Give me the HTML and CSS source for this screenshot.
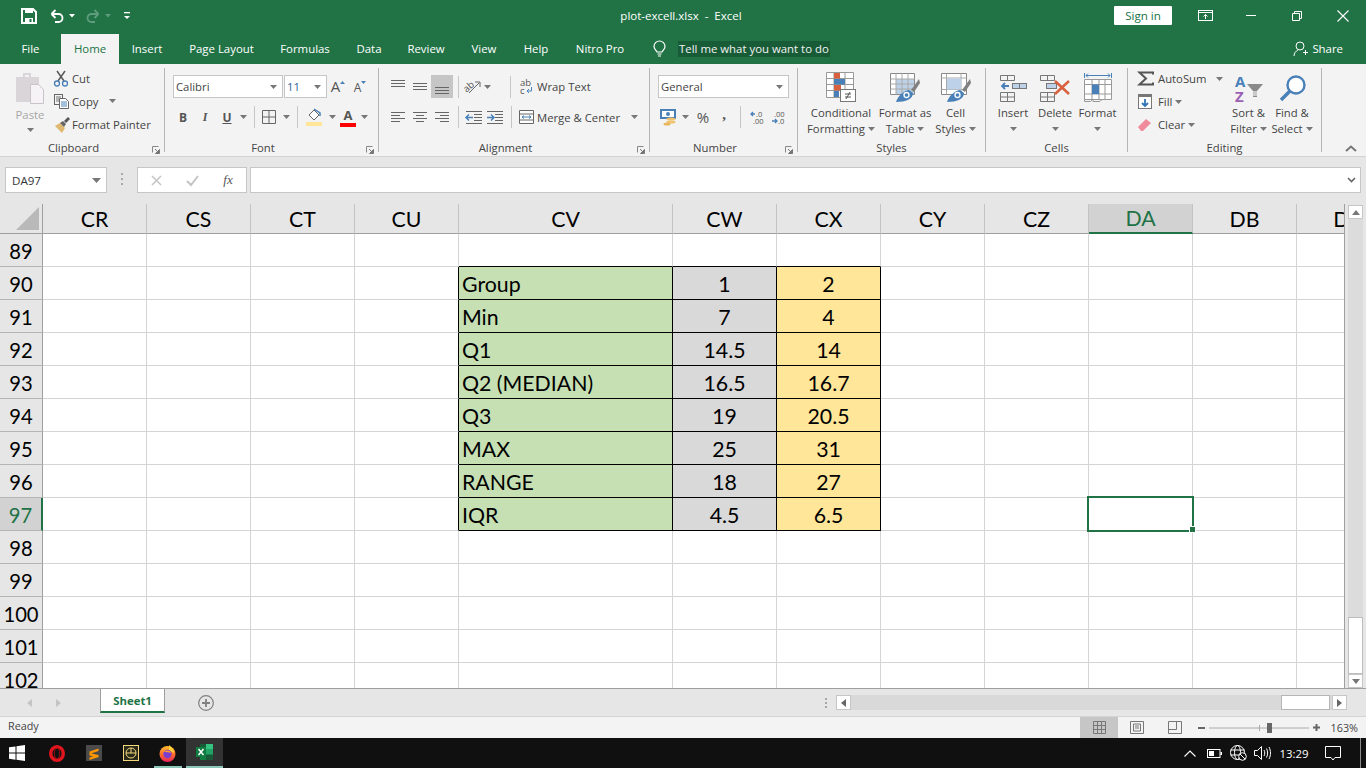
FILE: index.html
```html
<!DOCTYPE html>
<html lang="en">
<head>
<meta charset="utf-8">
<title>plot-excell.xlsx - Excel</title>
<link rel="stylesheet" href="styles.css">
</head>
<body>
<svg class="defs" aria-hidden="true">
  <symbol id="car" viewBox="0 0 7 4"><path d="M0 0h7L3.500 4z" fill="#777"/></symbol>
  <symbol id="launch" viewBox="0 0 8 8"><path d="M.5 6.500V.5h6" fill="none" stroke="#888"/><path d="M3 3l3.500 3.500M7.500 3.500v4h-4z" fill="#777" stroke="#777"/></symbol>
</svg>

<header class="titlebar">
  <div class="qat">
    <span class="w20"><svg width="16" height="16" viewBox="0 0 16 16"><path d="M1 1h11l3 3v11H1z" fill="none" stroke="#fff" stroke-width="2"/><rect x="4" y="2" width="8" height="3" fill="#fff"/><rect x="4" y="10" width="8" height="5" fill="#fff"/><rect x="8.500" y="11" width="2" height="3" fill="#217346"/></svg></span>
    <span class="w8"></span>
    <span class="w20"><svg width="14" height="14" viewBox="0 0 14 14"><path d="M1.500 5L5.500 1M1.500 5l4 4M1.500 5h7a4 4 0 0 1 0 8H5" fill="none" stroke="#fff" stroke-width="1.800"/></svg></span>
    <span class="w10"><svg width="6" height="4" viewBox="0 0 6 4"><path d="M0 0h6L3 3.500z" fill="#fff"/></svg></span>
    <span class="w6"></span>
    <span class="w20"><svg width="14" height="14" viewBox="0 0 14 14"><path d="M12.500 5L8.500 1M12.500 5l-4 4M12.500 5h-7a4 4 0 0 0 0 8H9" fill="none" stroke="#5f9c7d" stroke-width="1.800"/></svg></span>
    <span class="w10"><svg width="6" height="4" viewBox="0 0 6 4"><path d="M0 0h6L3 3.500z" fill="#5f9c7d"/></svg></span>
    <span class="w10"></span>
    <span class="w8"><svg width="6" height="8" viewBox="0 0 6 8"><rect width="6" height="1.300" fill="#fff"/><path d="M0 4h6L3 7z" fill="#fff"/></svg></span>
  </div>
  <div class="doc-title">plot-excell.xlsx &nbsp;-&nbsp; Excel</div>
  <div class="winctl">
    <button class="signin">Sign in</button>
    <span class="wbtn"><svg width="15" height="11" viewBox="0 0 15 11"><rect x=".5" y=".5" width="14" height="10" fill="none" stroke="#fff"/><path d="M0 2.500h15" stroke="#fff"/><path d="M7.500 9V4.500M5.500 6.500l2-2 2 2" fill="none" stroke="#fff"/></svg></span>
    <span class="wbtn"><svg width="10" height="1" viewBox="0 0 10 1"><rect width="10" height="1" fill="#fff"/></svg></span>
    <span class="wbtn"><svg width="10" height="10" viewBox="0 0 10 10"><path d="M.5 2.500h7v7h-7zM2.500 2.500v-2h7v7h-2" fill="none" stroke="#fff"/></svg></span>
    <span class="wbtn"><svg width="12" height="12" viewBox="0 0 12 12"><path d="M.5.500l11 11M11.500.5l-11 11" stroke="#fff" stroke-width="1.100"/></svg></span>
  </div>
</header>

<nav class="tabs">
  <a class="tab">File</a>
  <a class="tab active">Home</a>
  <a class="tab">Insert</a>
  <a class="tab">Page Layout</a>
  <a class="tab">Formulas</a>
  <a class="tab">Data</a>
  <a class="tab">Review</a>
  <a class="tab">View</a>
  <a class="tab">Help</a>
  <a class="tab">Nitro Pro</a>
  <span class="bulb"><svg width="13" height="16" viewBox="0 0 13 16"><path d="M4 11C3 9 1 8 1 5.500a5.500 5.500 0 0 1 11 0C12 8 10 9 9 11z" fill="none" stroke="#fff" stroke-width="1.200"/><path d="M4.500 13h4M5 15h3" stroke="#fff" stroke-width="1.200"/></svg></span>
  <span class="tellme">Tell me what you want to do</span>
  <span class="share"><svg width="15" height="16" viewBox="0 0 15 16"><circle cx="7" cy="5" r="4" fill="none" stroke="#fff"/><path d="M1 15c0-3 2-5 4-6M10 11.500h5M12.500 9v5" fill="none" stroke="#fff"/></svg>Share</span>
</nav>

<section class="ribbon">
  <div class="group g-clip">
    <div class="body pl15">
      <div class="big w30 dim">
        <div class="big-ic"><svg width="28" height="31" viewBox="0 0 28 31"><path d="M0 4h7V0h8v4h8v25H0z" fill="#d9d5d9"/><rect x="9" y="2" width="4" height="2" fill="#f3f3f3"/><path d="M14.500 11.500h8l5 5v14h-13z" fill="#f5f3f5" stroke="#c8c4c8"/></svg></div>
        <div class="big-t">Paste</div>
        <div class="big-t"><svg class="car" width="7" height="4"><use href="#car"/></svg></div>
      </div>
      <div class="smalls ml9">
        <div class="small"><span class="sic"><svg width="14" height="16" viewBox="0 0 14 16"><path d="M3 0l7 10M11 0L4 10" stroke="#5a5a5a" stroke-width="1.500" fill="none"/><circle cx="3" cy="12.500" r="2.500" fill="none" stroke="#4a80b8" stroke-width="1.300"/><circle cx="11" cy="12.500" r="2.500" fill="none" stroke="#4a80b8" stroke-width="1.300"/></svg></span>Cut</div>
        <div class="small"><span class="sic"><svg width="15" height="15" viewBox="0 0 15 15"><rect x=".5" y=".5" width="8" height="10" fill="#f3f3f3" stroke="#666"/><path d="M2 3h5M2 5h3M2 7h3" stroke="#777"/><path d="M5.500 4.500h6l3 3v7h-9z" fill="#fff" stroke="#666"/><path d="M7 8h6M7 10h6M7 12h6" stroke="#4a80b8"/></svg></span><span class="t37">Copy</span><svg class="car" width="7" height="4"><use href="#car"/></svg></div>
        <div class="small"><span class="sic"><svg width="16" height="16" viewBox="0 0 16 16"><path d="M1 9l5-3 5 5-3 5z" fill="#e0b870"/><path d="M6 6l3-2 3 3-2 3z" fill="#666"/><path d="M10 4l4-4 2 2-4 4z" fill="#555"/></svg></span>Format Painter</div>
      </div>
    </div>
    <div class="label"><span class="lt">Clipboard</span><svg class="launch" width="8" height="8"><use href="#launch"/></svg></div>
  </div>

  <div class="group g-font">
    <div class="body col pt7">
      <div class="row pl8">
        <div class="combo w110"><span>Calibri</span><svg width="7" height="4"><use href="#car"/></svg></div>
        <div class="combo w44 ml1"><span class="blue">11</span><svg width="7" height="4"><use href="#car"/></svg></div>
        <span class="w22"><span class="ga">A</span><svg class="tri" width="5" height="3" viewBox="0 0 5 3"><path d="M0 3h5L2.500 0z" fill="#4a80b8"/></svg></span>
        <span class="w22"><span class="gb">A</span><svg class="tri" width="5" height="3" viewBox="0 0 5 3"><path d="M0 0h5L2.500 3z" fill="#4a80b8"/></svg></span>
      </div>
      <div class="row pl7">
        <span class="w22 fb">B</span>
        <span class="w22 fi">I</span>
        <span class="w22 fu">U</span>
        <span class="w11"><svg width="7" height="4"><use href="#car"/></svg></span>
        <span class="w10"><i class="sep"></i></span>
        <span class="w20"><svg width="14" height="14" viewBox="0 0 14 14"><path d="M.5.500h13v13H.5zM7 .5v13M.5 7h13" fill="none" stroke="#666"/></svg></span>
        <span class="w14"><svg width="7" height="4"><use href="#car"/></svg></span>
        <span class="w8"><i class="sep"></i></span>
        <span class="w26"><svg width="17" height="18" viewBox="0 0 17 18"><path d="M3 7l5-5 5 5-5 5z" fill="#fff" stroke="#666"/><path d="M8 1l6 4v3" fill="none" stroke="#4a80b8" stroke-width="1.500"/><rect x="0" y="14" width="16" height="4" fill="#ffe699"/></svg></span>
        <span class="w10"><svg width="7" height="4"><use href="#car"/></svg></span>
        <span class="w22 fc">A</span>
        <span class="w10"><svg width="7" height="4"><use href="#car"/></svg></span>
      </div>
    </div>
    <div class="label"><span class="lt">Font</span><svg class="launch" width="8" height="8"><use href="#launch"/></svg></div>
  </div>

  <div class="group g-align">
    <div class="body col pt7">
      <div class="row pl8">
        <span class="w22 al-t"><svg width="14" height="8" viewBox="0 0 14 8"><path d="M0 .5h14M0 3.500h14M0 6.500h14" stroke="#666"/></svg></span>
        <span class="w22 al-m"><svg width="14" height="8" viewBox="0 0 14 8"><path d="M0 .5h14M0 3.500h14M0 6.500h14" stroke="#666"/></svg></span>
        <span class="w22 al-b on"><svg width="14" height="7" viewBox="0 0 14 7"><path d="M0 .5h14M0 3.500h14M0 6.500h14" stroke="#666"/></svg></span>
        <span class="w10"><i class="sep"></i></span>
        <span class="w18"><svg width="17" height="15" viewBox="0 0 17 15"><text x="0" y="11" class="svgt" transform="rotate(-40 5 9)">ab</text><path d="M5 14L15 4M11 3h5v5" fill="none" stroke="#666"/></svg></span>
        <span class="w12"><svg width="7" height="4"><use href="#car"/></svg></span>
        <span class="w12"></span>
        <span class="w10"><i class="sep"></i></span>
        <span class="w22"><svg width="13" height="17" viewBox="0 0 13 17"><text x="0" y="7.500" class="svgt">ab</text><text x="0" y="16" class="svgt">c</text><path d="M11.500 9v4H7M9 11l-2 2 2 2" fill="none" stroke="#4a80b8"/></svg></span>
        <span class="txt">Wrap Text</span>
      </div>
      <div class="row pl8">
        <span class="w22"><svg width="14" height="11" viewBox="0 0 14 11"><path d="M0 .5h14M0 3.500h9M0 6.500h14M0 9.500h9" stroke="#666"/></svg></span>
        <span class="w22"><svg width="14" height="11" viewBox="0 0 14 11"><path d="M0 .5h14M3 3.500h8M0 6.500h14M3 9.500h8" stroke="#666"/></svg></span>
        <span class="w22"><svg width="14" height="11" viewBox="0 0 14 11"><path d="M0 .5h14M5 3.500h9M0 6.500h14M5 9.500h9" stroke="#666"/></svg></span>
        <span class="w10"><i class="sep"></i></span>
        <span class="w21"><svg width="16" height="13" viewBox="0 0 16 13"><path d="M0 6.500h7M3 3.500l-3 3 3 3" fill="none" stroke="#4a80b8" stroke-width="1.500"/><path d="M0 .5h16M8 3.500h8M8 6.500h8M8 9.500h8M0 12.500h16" stroke="#666"/></svg></span>
        <span class="w22"><svg width="16" height="13" viewBox="0 0 16 13"><path d="M7 6.500H0M4 3.500l3 3-3 3" fill="none" stroke="#4a80b8" stroke-width="1.500"/><path d="M0 .5h16M8 3.500h8M8 6.500h8M8 9.500h8M0 12.500h16" stroke="#666"/></svg></span>
        <span class="w10"><i class="sep"></i></span>
        <span class="w21"><svg width="15" height="14" viewBox="0 0 15 14"><path d="M.5.500h14v13H.5zM.5 4h14M.5 10h14" fill="#fff" stroke="#666"/><path d="M3 7h9M5 5.500L3 7l2 1.500M10 5.500L12 7l-2 1.500" fill="none" stroke="#4a80b8"/></svg></span>
        <span class="txt t94">Merge &amp; Center</span>
        <svg width="7" height="4"><use href="#car"/></svg>
      </div>
    </div>
    <div class="label"><span class="lt">Alignment</span><svg class="launch" width="8" height="8"><use href="#launch"/></svg></div>
  </div>

  <div class="group g-num">
    <div class="body col pt7">
      <div class="row pl8"><div class="combo w131"><span>General</span><svg width="7" height="4"><use href="#car"/></svg></div></div>
      <div class="row pl8">
        <span class="w20"><svg width="17" height="17" viewBox="0 0 17 17"><rect x="1" y="1" width="14" height="8" fill="#fff" stroke="#4a80b8" stroke-width="2"/><circle cx="8" cy="5" r="2" fill="#4a80b8"/><ellipse cx="11" cy="10" rx="4.500" ry="1.500" fill="#f0c36d"/><ellipse cx="11" cy="13" rx="4.500" ry="1.500" fill="#f0c36d"/><ellipse cx="7" cy="15" rx="3.500" ry="1.500" fill="#e8b45c"/></svg></span>
        <span class="w14"><svg width="7" height="4"><use href="#car"/></svg></span>
        <span class="w22 fp">%</span>
        <span class="w20 fk">,</span>
        <span class="w12"><i class="sep"></i></span>
        <span class="w21 dec"><svg width="14" height="15" viewBox="0 0 14 15"><path d="M5 4H1M3 2L1 4l2 2" fill="none" stroke="#4a80b8" stroke-width="1.300"/><text x="6" y="6.500" class="svgs">.0</text><text x="3" y="14" class="svgs">.00</text></svg></span>
        <span class="w21 dec"><svg width="14" height="15" viewBox="0 0 14 15"><text x="3" y="6.500" class="svgs">.00</text><path d="M1 11h5M4 9l2 2-2 2" fill="none" stroke="#4a80b8" stroke-width="1.300"/><text x="7" y="14" class="svgs">.0</text></svg></span>
      </div>
    </div>
    <div class="label"><span class="lt">Number</span><svg class="launch" width="8" height="8"><use href="#launch"/></svg></div>
  </div>

  <div class="group g-styles">
    <div class="body pl11">
      <div class="big w64">
        <div class="big-ic"><svg width="30" height="30" viewBox="0 0 30 30"><path d="M.5.500h27v25H.5zM.5 6.500h27M.5 12.500h27M.5 18.500h27M8 .5v25M19 .5v25" fill="#fff" stroke="#999"/><rect x="8" y="1" width="6" height="5.500" fill="#d9603f"/><rect x="8" y="7" width="11" height="5.500" fill="#4a80b8"/><rect x="8" y="13" width="7" height="5.500" fill="#d9603f"/><rect x="8" y="19" width="5" height="6" fill="#4a80b8"/><rect x="14.500" y="17.500" width="15" height="12" fill="#fff" stroke="#777"/><path d="M19 22h6M19 25h6M24 20l-4 7" stroke="#555"/></svg></div>
        <div class="big-t">Conditional</div>
        <div class="big-t">Formatting<svg class="car3" width="7" height="4"><use href="#car"/></svg></div>
      </div>
      <div class="big w64">
        <div class="big-ic"><svg width="30" height="29" viewBox="0 0 30 29"><path d="M.5.500h24v21H.5z" fill="#fff" stroke="#888"/><rect x="6" y="6" width="18" height="15" fill="#bdd2e8"/><path d="M.5 6h24M.5 11h24M.5 16h24M6 .5v21M12 .5v21M18 .5v21" stroke="#aaa" fill="none"/><path d="M29 6l-8 11 3 2 6-9z" fill="#808080"/><path d="M6 29c2-6 7-11 13-12l4 3c0 6-7 9-17 9z" fill="#4a80b8"/><circle cx="16.500" cy="22" r="2.500" fill="none" stroke="#fff" stroke-width="1.300"/></svg></div>
        <div class="big-t">Format as</div>
        <div class="big-t">Table<svg class="car3" width="7" height="4"><use href="#car"/></svg></div>
      </div>
      <div class="big w37">
        <div class="big-ic"><svg width="30" height="29" viewBox="0 0 30 29"><path d="M.5.500h25v21H.5z" fill="#fff" stroke="#888"/><path d="M.5 5h25M.5 16.500h25M5.500 .5v21M20 .5v21" stroke="#aaa" fill="none"/><rect x="6" y="5.500" width="14" height="11" fill="#bdd2e8"/><path d="M29 6l-8 11 3 2 6-9z" fill="#808080"/><path d="M6 29c2-6 7-11 13-12l4 3c0 6-7 9-17 9z" fill="#4a80b8"/><circle cx="16.500" cy="22" r="2.500" fill="none" stroke="#fff" stroke-width="1.300"/></svg></div>
        <div class="big-t">Cell</div>
        <div class="big-t">Styles<svg class="car3" width="7" height="4"><use href="#car"/></svg></div>
      </div>
    </div>
    <div class="label"><span class="lt">Styles</span></div>
  </div>

  <div class="group g-cells">
    <div class="body pl6">
      <div class="big w42">
        <div class="big-ic"><svg width="27" height="27" viewBox="0 0 27 27"><path d="M.5.500h14v5H.5zM7.500.5v5M.5 17.500h14v9H.5zM.5 22h14M7.500 17.500v9" fill="none" stroke="#777"/><rect x="12.500" y="8.500" width="14" height="5" fill="#bdd2e8" stroke="#777"/><path d="M19.500 8.500v5" stroke="#777"/><path d="M9 11H2M5 8l-3 3 3 3" fill="none" stroke="#4a80b8" stroke-width="1.800"/></svg></div>
        <div class="big-t">Insert</div>
        <div class="big-t"><svg class="car" width="7" height="4"><use href="#car"/></svg></div>
      </div>
      <div class="big w42">
        <div class="big-ic"><svg width="30" height="27" viewBox="0 0 30 27"><path d="M.5.500h14v5H.5zM7.500.5v5M.5 17.500h14v9H.5zM.5 22h14M7.500 17.500v9" fill="none" stroke="#777"/><rect x="6.500" y="8.500" width="10" height="5" fill="#bdd2e8" stroke="#777"/><path d="M15 6l14 13M29 6L15 19" stroke="#d9603f" stroke-width="2.500"/></svg></div>
        <div class="big-t">Delete</div>
        <div class="big-t"><svg class="car" width="7" height="4"><use href="#car"/></svg></div>
      </div>
      <div class="big w43">
        <div class="big-ic"><svg width="28" height="29" viewBox="0 0 28 29"><path d="M.5 0v5M27.500 0v5M2 2.500h24M4 .5l-2 2 2 2M24 .5l2 2-2 2" fill="none" stroke="#4a80b8"/><path d="M.5 6.500h27v20H.5zM.5 11.500h27M.5 21h27M8 6.500v20M15 6.500v20M21 6.500v20" fill="#fff" stroke="#999"/><rect x="8" y="11.500" width="7" height="9.500" fill="#4a80b8"/><path d="M.5 26.500v2h6l2-2M9 26.500v2h7l2-2" fill="none" stroke="#999"/></svg></div>
        <div class="big-t">Format</div>
        <div class="big-t"><svg class="car" width="7" height="4"><use href="#car"/></svg></div>
      </div>
    </div>
    <div class="label"><span class="lt">Cells</span></div>
  </div>

  <div class="group g-edit">
    <div class="body pl10">
      <div class="smalls w89">
        <div class="small"><span class="sic20"><svg width="15" height="15" viewBox="0 0 15 15"><path d="M15 3.500V1.500H1.500L8 7.500 1.500 13.500H15v-2" fill="none" stroke="#555" stroke-width="2"/></svg></span><span class="t58">AutoSum</span><svg width="7" height="4"><use href="#car"/></svg></div>
        <div class="small"><span class="sic20"><svg width="14" height="15" viewBox="0 0 14 15"><rect x=".5" y=".5" width="13" height="14" fill="#fff" stroke="#777"/><rect width="14" height="3" fill="#777"/><path d="M7 5v7M4 9l3 3 3-3" fill="none" stroke="#2f74b5" stroke-width="1.800"/></svg></span>Fill<svg class="car3" width="7" height="4"><use href="#car"/></svg></div>
        <div class="small"><span class="sic20"><svg width="13" height="13" viewBox="0 0 13 13"><path d="M0 9l8-8 5 4-8 8H3z" fill="#ef8b9b"/></svg></span>Clear<svg class="car3" width="7" height="4"><use href="#car"/></svg></div>
      </div>
      <div class="big w43">
        <div class="big-ic"><svg width="30" height="27" viewBox="0 0 30 27"><text x="1" y="12" class="az a">A</text><text x="1" y="27" class="az z">Z</text><path d="M13 9h16l-6 7v6h-4v-6z" fill="#8a8a8a"/><path d="M19 16h4v5h-4z" fill="#f3f3f3" opacity=".6"/></svg></div>
        <div class="big-t">Sort &amp;</div>
        <div class="big-t">Filter<svg class="car3" width="7" height="4"><use href="#car"/></svg></div>
      </div>
      <div class="big w44">
        <div class="big-ic"><svg width="27" height="27" viewBox="0 0 27 27"><circle cx="17" cy="10" r="8.500" fill="#fff" stroke="#4a80b8" stroke-width="2.400"/><path d="M11 16L2 25" stroke="#4a80b8" stroke-width="3.600"/></svg></div>
        <div class="big-t">Find &amp;</div>
        <div class="big-t">Select<svg class="car3" width="7" height="4"><use href="#car"/></svg></div>
      </div>
    </div>
    <div class="label"><span class="lt">Editing</span></div>
  </div>

  <div class="collapse"><svg width="12" height="7" viewBox="0 0 12 7"><path d="M1 6l5-4.500L11 6" fill="none" stroke="#777" stroke-width="2"/></svg></div>
</section>

<section class="formula">
  <div class="namebox"><span>DA97</span><svg width="9" height="5" viewBox="0 0 9 5"><path d="M0 0h9L4.500 5z" fill="#777"/></svg></div>
  <div class="dots"><i></i><i></i><i></i></div>
  <div class="fxbtns">
    <span><svg width="11" height="11" viewBox="0 0 11 11"><path d="M1 1l9 9M10 1l-9 9" stroke="#c4c4c4" stroke-width="1.500"/></svg></span>
    <span><svg width="13" height="11" viewBox="0 0 13 11"><path d="M1 6l4 4 7-9" fill="none" stroke="#c4c4c4" stroke-width="2"/></svg></span>
    <span class="fx">fx</span>
  </div>
  <div class="fxinput"><svg width="9" height="6" viewBox="0 0 9 6"><path d="M1 1l3.500 3.500L8 1" fill="none" stroke="#666" stroke-width="1.600"/></svg></div>
</section>

<main class="sheetwrap">
  <div class="grid">
    <table class="cells">
      <colgroup><col class="ch"><col class="cn"><col class="cn"><col class="cn"><col class="cn"><col class="cw"><col class="cn"><col class="cn"><col class="cn"><col class="cn"><col class="cn"><col class="cn"><col class="cn"></colgroup>
      <thead>
        <tr><th class="corner"><svg width="23" height="23" viewBox="0 0 23 23"><path d="M23 0v23H0z" fill="#b9b9b9"/></svg></th><th>CR</th><th>CS</th><th>CT</th><th>CU</th><th>CV</th><th>CW</th><th>CX</th><th>CY</th><th>CZ</th><th class="csel">DA</th><th>DB</th><th>DC</th></tr>
      </thead>
      <tbody>
        <tr><th>89</th><td></td><td></td><td></td><td></td><td class="tt"></td><td class="tt"></td><td class="tt"></td><td></td><td></td><td></td><td></td><td></td></tr>
        <tr><th>90</th><td></td><td></td><td></td><td class="tl"></td><td class="lab">Group</td><td class="gr">1</td><td class="ye">2</td><td></td><td></td><td></td><td></td><td></td></tr>
        <tr><th>91</th><td></td><td></td><td></td><td class="tl"></td><td class="lab">Min</td><td class="gr">7</td><td class="ye">4</td><td></td><td></td><td></td><td></td><td></td></tr>
        <tr><th>92</th><td></td><td></td><td></td><td class="tl"></td><td class="lab">Q1</td><td class="gr">14.5</td><td class="ye">14</td><td></td><td></td><td></td><td></td><td></td></tr>
        <tr><th>93</th><td></td><td></td><td></td><td class="tl"></td><td class="lab">Q2 (MEDIAN)</td><td class="gr">16.5</td><td class="ye">16.7</td><td></td><td></td><td></td><td></td><td></td></tr>
        <tr><th>94</th><td></td><td></td><td></td><td class="tl"></td><td class="lab">Q3</td><td class="gr">19</td><td class="ye">20.5</td><td></td><td></td><td></td><td></td><td></td></tr>
        <tr><th>95</th><td></td><td></td><td></td><td class="tl"></td><td class="lab">MAX</td><td class="gr">25</td><td class="ye">31</td><td></td><td></td><td></td><td></td><td></td></tr>
        <tr><th>96</th><td></td><td></td><td></td><td class="tl"></td><td class="lab">RANGE</td><td class="gr">18</td><td class="ye">27</td><td></td><td></td><td></td><td></td><td></td></tr>
        <tr><th class="rsel">97</th><td></td><td></td><td></td><td class="tl"></td><td class="lab">IQR</td><td class="gr">4.5</td><td class="ye">6.5</td><td></td><td></td><td class="active-cell"><div class="selbox"><i class="handle"></i></div></td><td></td><td></td></tr>
        <tr><th>98</th><td></td><td></td><td></td><td></td><td></td><td></td><td></td><td></td><td></td><td></td><td></td><td></td></tr>
        <tr><th>99</th><td></td><td></td><td></td><td></td><td></td><td></td><td></td><td></td><td></td><td></td><td></td><td></td></tr>
        <tr><th>100</th><td></td><td></td><td></td><td></td><td></td><td></td><td></td><td></td><td></td><td></td><td></td><td></td></tr>
        <tr><th>101</th><td></td><td></td><td></td><td></td><td></td><td></td><td></td><td></td><td></td><td></td><td></td><td></td></tr>
        <tr><th>102</th><td></td><td></td><td></td><td></td><td></td><td></td><td></td><td></td><td></td><td></td><td></td><td></td></tr>
      </tbody>
    </table>
  </div>
  <div class="vscroll">
    <div class="sbtn"><svg width="8" height="5" viewBox="0 0 8 5"><path d="M0 5h8L4 0z" fill="#777"/></svg></div>
    <div class="vtrack"><div class="vthumb"></div></div>
    <div class="sbtn"><svg width="8" height="5" viewBox="0 0 8 5"><path d="M0 0h8L4 5z" fill="#777"/></svg></div>
  </div>
</main>

<section class="sheetbar">
  <span class="w30"><svg width="5" height="8" viewBox="0 0 5 8"><path d="M5 0v8L0 4z" fill="#c4c4c4"/></svg></span>
  <span class="w28"><svg width="5" height="8" viewBox="0 0 5 8"><path d="M0 0v8l5-4z" fill="#c4c4c4"/></svg></span>
  <div class="sheet-tab">Sheet1</div>
  <span class="addsheet"><svg width="16" height="16" viewBox="0 0 16 16"><circle cx="8" cy="8" r="7.300" fill="none" stroke="#808080" stroke-width="1.200"/><path d="M8 4v8M4 8h8" stroke="#808080" stroke-width="1.800"/></svg></span>
  <div class="hscroll">
    <div class="dots h"><i></i><i></i><i></i></div>
    <div class="hbtn"><svg width="5" height="8" viewBox="0 0 5 8"><path d="M5 0v8L0 4z" fill="#666"/></svg></div>
    <div class="htrack"><div class="hthumb"></div></div>
    <div class="hbtn"><svg width="5" height="8" viewBox="0 0 5 8"><path d="M0 0v8l5-4z" fill="#666"/></svg></div>
  </div>
</section>

<footer class="status">
  <span class="ready">Ready</span>
  <div class="views">
    <span class="view on"><svg width="13" height="13" viewBox="0 0 13 13"><path d="M.5.500h12v12H.5zM4.500.5v12M8.500.5v12M.5 4.500h12M.5 8.500h12" fill="none" stroke="#777"/></svg></span>
    <span class="view"><svg width="14" height="13" viewBox="0 0 14 13"><path d="M.5.500h13v12H.5z" fill="none" stroke="#777"/><path d="M3.500 3h7v7h-7zM5 5h4M5 7h4" fill="none" stroke="#777"/></svg></span>
    <span class="view"><svg width="14" height="13" viewBox="0 0 14 13"><path d="M.5.500h13v12H.5zM.5 8.500h8V.5" fill="none" stroke="#777"/></svg></span>
    <span class="zm15"><svg width="7" height="2" viewBox="0 0 7 2"><rect width="7" height="2" fill="#666"/></svg></span>
    <span class="zslider"><svg width="100" height="12" viewBox="0 0 100 12"><path d="M0 6h100" stroke="#aaa"/><path d="M50.500 3v6" stroke="#aaa"/><rect x="58" y="1" width="5" height="10" fill="#666"/></svg></span>
    <span class="zm14"><svg width="7" height="7" viewBox="0 0 7 7"><path d="M0 2.500h7v2H0zM2.500 0h2v7h-2z" fill="#666"/></svg></span>
    <span class="zoom">163%</span>
  </div>
</footer>

<footer class="taskbar">
  <span class="tb start"><svg width="16" height="16" viewBox="0 0 16 16"><path d="M0 2.300l6.500-.9v6.200H0zM7.500 1.300L16 0v7.600H7.500zM0 8.500h6.500v6.200L0 13.800zM7.500 8.500H16V16l-8.500-1.200z" fill="#fff"/></svg></span>
  <span class="tb"><svg width="16" height="17" viewBox="0 0 16 17"><ellipse cx="8" cy="8.500" rx="6.300" ry="6.800" fill="none" stroke="#e2151f" stroke-width="3.400"/><ellipse cx="8" cy="8.500" rx="2.700" ry="5.500" fill="none" stroke="#a50d14" stroke-width="1"/></svg></span>
  <span class="tb"><svg width="16" height="16" viewBox="0 0 16 16"><rect width="16" height="16" fill="#4a4a4a"/><path d="M3.500 6.500l9-3v2.500l-9 3zM3.500 8.500l9 1.500v2.500l-9-2zM3.500 8l9 2v2l-9 3v-2.500l6-2-6-1.500z" fill="#ff9800"/></svg></span>
  <span class="tb"><svg width="16" height="16" viewBox="0 0 16 16"><rect x=".5" y=".5" width="15" height="15" fill="#2a2a1a" stroke="#f5d67a"/><circle cx="8" cy="8" r="5" fill="none" stroke="#f5d67a"/><path d="M3 8h10M8 3v5" fill="none" stroke="#f5d67a"/></svg></span>
  <span class="tb ff"><svg width="17" height="17" viewBox="0 0 17 17"><defs><linearGradient id="fx1" x1="0" y1="0" x2="0" y2="1"><stop offset="0" stop-color="#ffbd2e"/><stop offset=".55" stop-color="#ff6a2a"/><stop offset="1" stop-color="#e8215f"/></linearGradient></defs><circle cx="8.500" cy="9" r="8" fill="url(#fx1)"/><path d="M10 0c2 2 5 4 5 8l-5-3z" fill="#ffd23a"/><circle cx="8.500" cy="9" r="4.200" fill="#7b3fd0"/><path d="M5 7c2-2 6-2 7 1-2-1-5-1-7-1z" fill="#ff9a2a"/></svg></span>
  <span class="tb xl"><svg width="17" height="16" viewBox="0 0 17 16"><rect x="4" width="13" height="16" fill="#185c37"/><rect x="10" width="7" height="5" fill="#33c481"/><rect x="10" y="5" width="7" height="5.500" fill="#21a366"/><rect x="4" y="10.500" width="6" height="5.500" fill="#107c41"/><rect y="3" width="10" height="10" fill="#107c41"/><path d="M2.500 5l5 6M7.500 5l-5 6" stroke="#fff" stroke-width="1.500"/></svg></span>
  <div class="tray">
    <span class="w24"><svg width="12" height="7" viewBox="0 0 12 7"><path d="M.5 6.500L6 1l5.500 5.500" fill="none" stroke="#fff" stroke-width="1.100"/></svg></span>
    <span class="w24"><svg width="15" height="9" viewBox="0 0 15 9"><rect x=".5" y=".5" width="12.500" height="8" fill="none" stroke="#fff"/><rect x="2" y="2" width="5" height="5" fill="#fff"/><rect x="13.500" y="3" width="1.500" height="3" fill="#fff"/></svg></span>
    <span class="w24"><svg width="17" height="16" viewBox="0 0 17 16"><circle cx="7.500" cy="7.500" r="7" fill="none" stroke="#fff"/><ellipse cx="7.500" cy="7.500" rx="3" ry="7" fill="none" stroke="#fff"/><path d="M.5 5h14M.5 10h14" stroke="#fff"/><circle cx="12.500" cy="11.500" r="3.800" fill="#101010" stroke="#fff"/><path d="M10 9l5 5" stroke="#fff"/></svg></span>
    <span class="w24"><svg width="17" height="14" viewBox="0 0 17 14"><path d="M.5 4.500h3l4-4v13l-4-4h-3z" fill="none" stroke="#fff"/><path d="M10 4c1 2 1 4 0 6M12.500 2.500c1.500 3 1.500 6 0 9M15 1c2 4 2 8 0 12" fill="none" stroke="#fff"/></svg></span>
    <span class="clock">13:29</span>
    <span class="notif"><svg width="16" height="15" viewBox="0 0 16 15"><path d="M.5.500h15v11H10L8 14 6 11.500H.5z" fill="none" stroke="#fff"/></svg></span>
    <span class="showdesk"></span>
  </div>
</footer>
</body>
</html>
```

FILE: styles.css
```css
* { box-sizing: border-box; }
html, body { margin: 0; padding: 0; }
body {
  width: 1366px; height: 768px; overflow: hidden;
  font-family: "Open Sans", "Noto Sans", sans-serif;
  font-size: 11.3px; color: #444; background: #f3f3f3;
  display: flex; flex-direction: column;
}
svg { display: block; flex: none; overflow: visible; }
.defs { display: none; }

/* generic fixed slots */
.w6,.w8,.w10,.w11,.w12,.w14,.w18,.w20,.w21,.w22,.w24,.w26,.w28,.w30 {
  display: flex; align-items: center; justify-content: center; flex: none;
}
.w6{width:6px}.w8{width:8px}.w10{width:10px}.w11{width:11px}.w12{width:12px}.w14{width:14px}
.w18{width:18px}.w20{width:20px}.w21{width:21px}.w22{width:22px}.w24{width:24px}.w26{width:26px}
.w28{width:28px}.w30{width:30px}

/* title */
.titlebar { height: 34px; background: #217346; color: #fff; display: flex; align-items: center; flex: none; }
.qat { width: 560px; display: flex; align-items: center; padding-left: 19px; padding-bottom: 2px; }
.doc-title { width: 242px; text-align: center; font-size: 11.5px; padding-bottom: 3px; }
.winctl { margin-left: auto; display: flex; align-items: center; padding-bottom: 3px; }
.signin { width: 58px; height: 19px; background: #fff; color: #217346; border: 0; border-radius: 1px; padding: 0; margin-right: 10px; font: 11.6px "Open Sans", sans-serif; }
.wbtn { width: 46px; display: flex; justify-content: center; }

/* tabs */
.tabs { height: 30px; background: #217346; display: flex; align-items: stretch; flex: none; }
.tab { display: flex; align-items: center; justify-content: center; color: #fff; font-size: 11.4px; padding-bottom: 1px; }
.tab:nth-child(1){width:61px}.tab:nth-child(2){width:58px}.tab:nth-child(3){width:56px}.tab:nth-child(4){width:93px}
.tab:nth-child(5){width:74px}.tab:nth-child(6){width:54px}.tab:nth-child(7){width:60px}.tab:nth-child(8){width:56px}
.tab:nth-child(9){width:48px}.tab:nth-child(10){width:80px}
.tab.active { background: #f3f3f3; color: #217346; }
.bulb { width: 38px; padding-left: 13px; display: flex; align-items: center; }
.tellme { align-self: center; height: 16px; line-height: 16px; width: 152px; padding-left: 1px; white-space: nowrap; background: #185c37; color: #f2f2f2; font-size: 11.4px; }
.share { margin-left: auto; padding-right: 23px; padding-bottom: 1px; display: flex; align-items: center; gap: 4px; color: #fff; font-size: 11.4px; }

/* ribbon */
.ribbon { height: 93px; background: #f3f3f3; border-bottom: 1px solid #d4d4d4; padding-top: 4px; display: flex; flex: none; }
.group { height: 84px; display: flex; flex-direction: column; border-right: 1px solid #b5b5b5; flex: none; }
.g-clip{width:165px}.g-font{width:214px}.g-align{width:271px}.g-num{width:148px}.g-styles{width:188px}.g-cells{width:142px}.g-edit{width:194px}
.body { height: 72px; display: flex; flex: none; }
.body.col { flex-direction: column; gap: 8px; }
.pt7 { padding-top: 7px; }
.pl6{padding-left:6px}.pl7{padding-left:7px}.pl8{padding-left:8px}.pl10{padding-left:10px}.pl11{padding-left:11px}.pl15{padding-left:15px}
.ml9{margin-left:9px}.ml1{margin-left:1px}
.label { height: 16px; margin-bottom: -4px; line-height: 16px; display: flex; align-items: center; flex: none; }
.lt { flex: 1; text-align: center; }
.launch { margin: 4px 4px 0 5px; }

.row { display: flex; align-items: center; height: 23px; }
.row + .row { height: 22px; }
.big { display: flex; flex-direction: column; align-items: center; flex: none; }
.big.w30{width:30px}.big.w37{width:37px}.big.w42{width:42px}.big.w43{width:43px}.big.w44{width:44px}.big.w64{width:64px}
.big-ic { height: 37px; display: flex; align-items: flex-end; padding-bottom: 3px; }
.big-t { height: 16px; line-height: 16px; white-space: nowrap; display: flex; align-items: center; justify-content: center; }
.dim .big-t { color: #a6a6a6; }
.car { margin-top: -1px; }
.car3 { margin-left: 3px; }
.smalls { display: flex; flex-direction: column; gap: 2px; flex: none; }
.smalls.w89 { width: 89px; }
.small { height: 21px; display: flex; align-items: center; white-space: nowrap; }
.sic { width: 18px; display: flex; }
.sic20 { width: 20px; display: flex; }
.t37 { width: 37px; }
.t58 { width: 58px; }
.t94 { width: 94px; }
.txt { white-space: nowrap; }

.combo { height: 23px; background: #fff; border: 1px solid #c6c6c6; display: flex; align-items: center; justify-content: space-between; padding: 0 5px 0 2px; flex: none; }
.combo.w110{width:110px}.combo.w44{width:43px}.combo.w131{width:131px}
.blue { color: #2f5f96; }
.sep { display: block; width: 1px; height: 22px; background: #c6c6c6; }
.on { background: #c6c6c6; align-self: stretch; }
.al-t { padding-bottom: 5px; }
.al-m { padding-top: 1px; }
.al-b { align-items: flex-end; padding-bottom: 4px; }
.ga { font: 15px/1 "Open Sans", sans-serif; color: #555; }
.gb { font: 12px/1 "Open Sans", sans-serif; color: #555; margin-top: 3px; }
.tri { margin: -9px 0 0 0; }
.fb { font: 700 12px "Open Sans", sans-serif; color: #555; }
.fi { font: italic 700 12px "Liberation Serif", serif; color: #555; }
.fu { font: 700 12px "Open Sans", sans-serif; color: #555; text-decoration: underline; }
.fc { font: 700 13px/15px "Open Sans", sans-serif; color: #555; border-bottom: 4px solid #f00; height: 19px; width: 16px; margin: 0 3px; flex: none; }
.fp { font: 15px "Open Sans", sans-serif; color: #555; }
.fk { font: 700 15px "Liberation Serif", serif; color: #555; padding-bottom: 5px; }
.svgt { font: 9.5px "Open Sans", sans-serif; fill: #555; }
.svgs { font: 7.5px "Open Sans", sans-serif; fill: #555; }
.az { font: 700 15px "Open Sans", sans-serif; }
.az.a { fill: #4a80b8; }
.az.z { fill: #9b5fb5; }
.collapse { flex: 1; display: flex; align-items: flex-end; justify-content: center; height: 84px; padding: 0 0 0 14px; }

/* formula */
.formula { height: 47px; background: #e6e6e6; padding-top: 10px; display: flex; align-items: flex-start; flex: none; }
.namebox { margin-left: 5px; width: 102px; height: 26px; background: #fff; border: 1px solid #c6c6c6; display: flex; align-items: center; justify-content: space-between; padding: 0 5px 0 6px; font-size: 11.6px; color: #333; }
.dots { width: 30px; display: flex; flex-direction: column; gap: 3px; align-items: center; padding-top: 6px; }
.dots i { width: 2px; height: 2px; background: #a8a8a8; display: block; }
.fxbtns { width: 110px; height: 26px; background: #fff; border: 1px solid #c6c6c6; display: flex; align-items: center; }
.fxbtns span { width: 36px; display: flex; justify-content: center; }
.fx { font: italic 13px "Liberation Serif", serif; color: #555; }
.fxinput { margin: 0 5px 0 3px; flex: 1; height: 26px; background: #fff; border: 1px solid #c6c6c6; display: flex; align-items: center; justify-content: flex-end; padding-right: 4px; }

/* sheet */
.sheetwrap { height: 484px; display: flex; background: #fff; flex: none; }
.grid { width: 1345px; height: 484px; overflow: hidden; border-right: 1px solid #9f9f9f; flex: none; }
.cells { border-collapse: separate; border-spacing: 0; table-layout: fixed; width: 1401px; font-family: Lato, "Open Sans", sans-serif; font-size: 21.3px; color: #000; }
.ch{width:43px}.cn{width:104px}.cw{width:214px}
.cells thead th { height: 30px; background: #e6e6e6; font-weight: 400; border-right: 1px solid #c4c4c4; border-bottom: 1px solid #9f9f9f; padding: 0; line-height: 28px; }
.cells thead th.corner { border-right: 1px solid #9f9f9f; padding: 0; }
.corner svg { margin: 0 0 0 16px; }
.cells tbody th { height: 33px; background: #e6e6e6; font-weight: 400; font-size: 20.2px; border-right: 1px solid #9f9f9f; border-bottom: 1px solid #b4b4b4; padding: 2px 0 0; line-height: 30px; }
.cells td { height: 33px; padding: 0; border-right: 1px solid #d4d4d4; border-bottom: 1px solid #d4d4d4; text-align: center; vertical-align: bottom; line-height: 29px; }
.cells td.tt { border-bottom-color: #000; }
.cells td.tl { border-right-color: #000; }
.cells td.lab { background: #c6e0b4; text-align: left; padding-left: 3px; border-color: #000; white-space: nowrap; }
.cells td.gr { background: #d9d9d9; border-color: #000; }
.cells td.ye { background: #ffe699; border-color: #000; }
.cells thead th.csel { background: #d2d2d2; color: #217346; border-bottom: 2px solid #217346; }
.cells tbody th.rsel { background: #d2d2d2; color: #217346; border-right: 2px solid #217346; }
.active-cell { position: relative; }
.selbox { position: absolute; left: -2px; top: -2px; width: 107px; height: 36px; border: 2px solid #217346; }
.handle { position: absolute; right: -4px; bottom: -3px; width: 7px; height: 7px; background: #217346; border: 1px solid #fff; display: block; }

.vscroll { flex: 1; background: #e6e6e6; padding: 1px 3px 0; display: flex; flex-direction: column; }
.sbtn { height: 14px; background: #fff; border: 1px solid #c6c6c6; display: flex; align-items: center; justify-content: center; flex: none; }
.vtrack { flex: 1; background: #dcdcdc; display: flex; flex-direction: column; justify-content: flex-end; }
.vthumb { height: 57px; background: #fff; border: 1px solid #bdbdbd; }

/* sheet bar */
.sheetbar { height: 28px; background: #e6e6e6; border-top: 1px solid #9f9f9f; padding-left: 14px; display: flex; align-items: stretch; flex: none; }
.sheetbar .w30, .sheetbar .w28 { height: 27px; }
.sheet-tab { width: 65px; height: 24px; margin-left: 28px; background: #fff; border: 1px solid #9f9f9f; border-top: 0; border-bottom: 2px solid #217346; color: #217346; font-weight: 700; font-size: 11.4px; text-align: center; line-height: 23px; flex: none; }
.addsheet { width: 24px; margin-left: 29px; display: flex; align-items: center; justify-content: center; }
.hscroll { margin-left: auto; margin-right: 19px; width: 532px; padding-top: 6px; display: flex; align-items: flex-start; height: 27px; }
.dots.h { width: 21px; padding-top: 3px; gap: 2px; }
.hbtn { width: 15px; height: 15px; background: #fff; border: 1px solid #c6c6c6; display: flex; align-items: center; justify-content: center; flex: none; }
.htrack { width: 481px; height: 15px; background: #d9d9d9; display: flex; justify-content: flex-end; padding-right: 2px; }
.hthumb { width: 49px; height: 15px; background: #fff; border: 1px solid #b5b5b5; }

/* status */
.status { height: 22px; background: #f3f3f3; border-top: 1px solid #d4d4d4; display: flex; align-items: stretch; justify-content: space-between; flex: none; }
.ready { padding-left: 8px; line-height: 18px; font-size: 10.8px; color: #444; }
.views { display: flex; align-items: center; }
.view { width: 38px; align-self: stretch; display: flex; align-items: center; justify-content: center; }
.view.on { background: #c6c6c6; }
.zm15 { width: 15px; display: flex; justify-content: center; }
.zm14 { width: 14px; display: flex; justify-content: center; }
.zslider { width: 100px; }
.zoom { width: 43px; text-align: right; padding-right: 8px; font-size: 10.8px; }

/* taskbar */
.taskbar { height: 30px; background: #101010; display: flex; align-items: stretch; flex: none; }
.tb { width: 37px; display: flex; align-items: center; justify-content: center; }
.tb.start { width: 38px; padding-right: 4px; }
.tb.ff { background: linear-gradient(#8cc8b8, #8cc8b8) center bottom / 28px 2px no-repeat; }
.tb.xl { background: #333; border-bottom: 2px solid #8cc8b8; }
.tray { margin-left: auto; display: flex; align-items: center; height: 30px; color: #fff; }
.clock { width: 40px; text-align: center; font-size: 11.4px; color: #fff; }
.notif { width: 38px; display: flex; justify-content: center; }
.showdesk { width: 14px; height: 30px; margin-left: 0; border-right: 5px solid #101010; box-shadow: inset -1px 0 0 #8a8a8a; }
```
